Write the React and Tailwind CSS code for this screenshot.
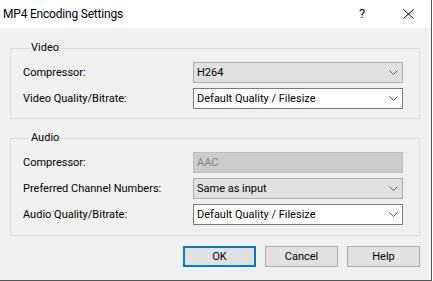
import React from 'react';

const font = { fontFamily: 'Roboto, "Noto Sans", sans-serif' };

const Chevron = ({ disabled }) => (
    <svg width="9" height="5" viewBox="0 0 9 5" className="shrink-0">
        <polyline points="0.5,0.5 4.5,4.5 8.5,0.5" fill="none" stroke={disabled ? '#c4c4c4' : '#606060'} strokeWidth="1" />
    </svg>
);

const Select = ({ value, variant = 'gray' }) => {
    const styles = {
        gray: 'bg-[#e1e1e1] border-[#adadad] text-black',
        white: 'bg-white border-[#7a7a7a] text-black',
        disabled: 'bg-[#cccccc] border-[#bfbfbf] text-[#838383]',
    };
    return (
        <div className={`w-[210px] h-[21px] border flex items-center justify-between pl-[3px] pr-[4px] ${styles[variant]}`}>
            <span className="leading-none">{value}</span>
            <Chevron disabled={variant === 'disabled'} />
        </div>
    );
};

const Row = ({ label, value, variant }) => (
    <div className="flex items-center justify-between">
        <span className="leading-none">{label}</span>
        <Select value={value} variant={variant} />
    </div>
);

const Group = ({ title, children, className }) => (
    <fieldset className={`border border-[#dcdcdc] pl-[12px] pr-[16px] pt-[7px] ${className}`}>
        <legend className="ml-[6px] px-[2px] h-[14px] leading-[14px]">{title}</legend>
        <div className="flex flex-col gap-[5px]">{children}</div>
    </fieldset>
);

export default function App() {
    return (
        <div className="w-[433px] h-[281px] flex bg-white text-[11px] text-black" style={font}>
            <div className="w-[432px] h-[281px] flex flex-col border-r border-b border-[#575757]">
                <div className="h-[28px] bg-white flex items-center justify-between pl-[3px] shrink-0">
                    <span className="text-[12px] tracking-[-0.2px]">MP4 Encoding Settings</span>
                    <div className="flex items-center">
                        <span className="w-[46px] text-center text-[13px]">?</span>
                        <div className="w-[46px] flex justify-center">
                            <svg width="11" height="10" viewBox="0 0 11 10">
                                <path d="M0.5 0.5 L10.5 9.5 M10.5 0.5 L0.5 9.5" stroke="#000" strokeWidth="1" fill="none" />
                            </svg>
                        </div>
                    </div>
                </div>
                <div className="flex-1 bg-[#f0f0f0] pl-[10px] pr-[11px] pt-[13px] flex flex-col">
                    <Group title="Video" className="pb-[9px]">
                        <Row label="Compressor:" value="H264" variant="gray" />
                        <Row label="Video Quality/Bitrate:" value="Default Quality / Filesize" variant="white" />
                    </Group>
                    <Group title="Audio" className="mt-[12px] pb-[10px]">
                        <Row label="Compressor:" value="AAC" variant="disabled" />
                        <Row label="Preferred Channel Numbers:" value="Same as input" variant="gray" />
                        <Row label="Audio Quality/Bitrate:" value="Default Quality / Filesize" variant="white" />
                    </Group>
                    <div className="flex justify-end gap-[9px] mt-[10px]">
                        <button className="w-[73px] h-[21px] bg-[#e1e1e1] border-2 border-[#0078d7] leading-none">OK</button>
                        <button className="w-[73px] h-[21px] bg-[#e1e1e1] border border-[#adadad] leading-none">Cancel</button>
                        <button className="w-[73px] h-[21px] bg-[#e1e1e1] border border-[#adadad] leading-none">Help</button>
                    </div>
                </div>
            </div>
        </div>
    );
}
